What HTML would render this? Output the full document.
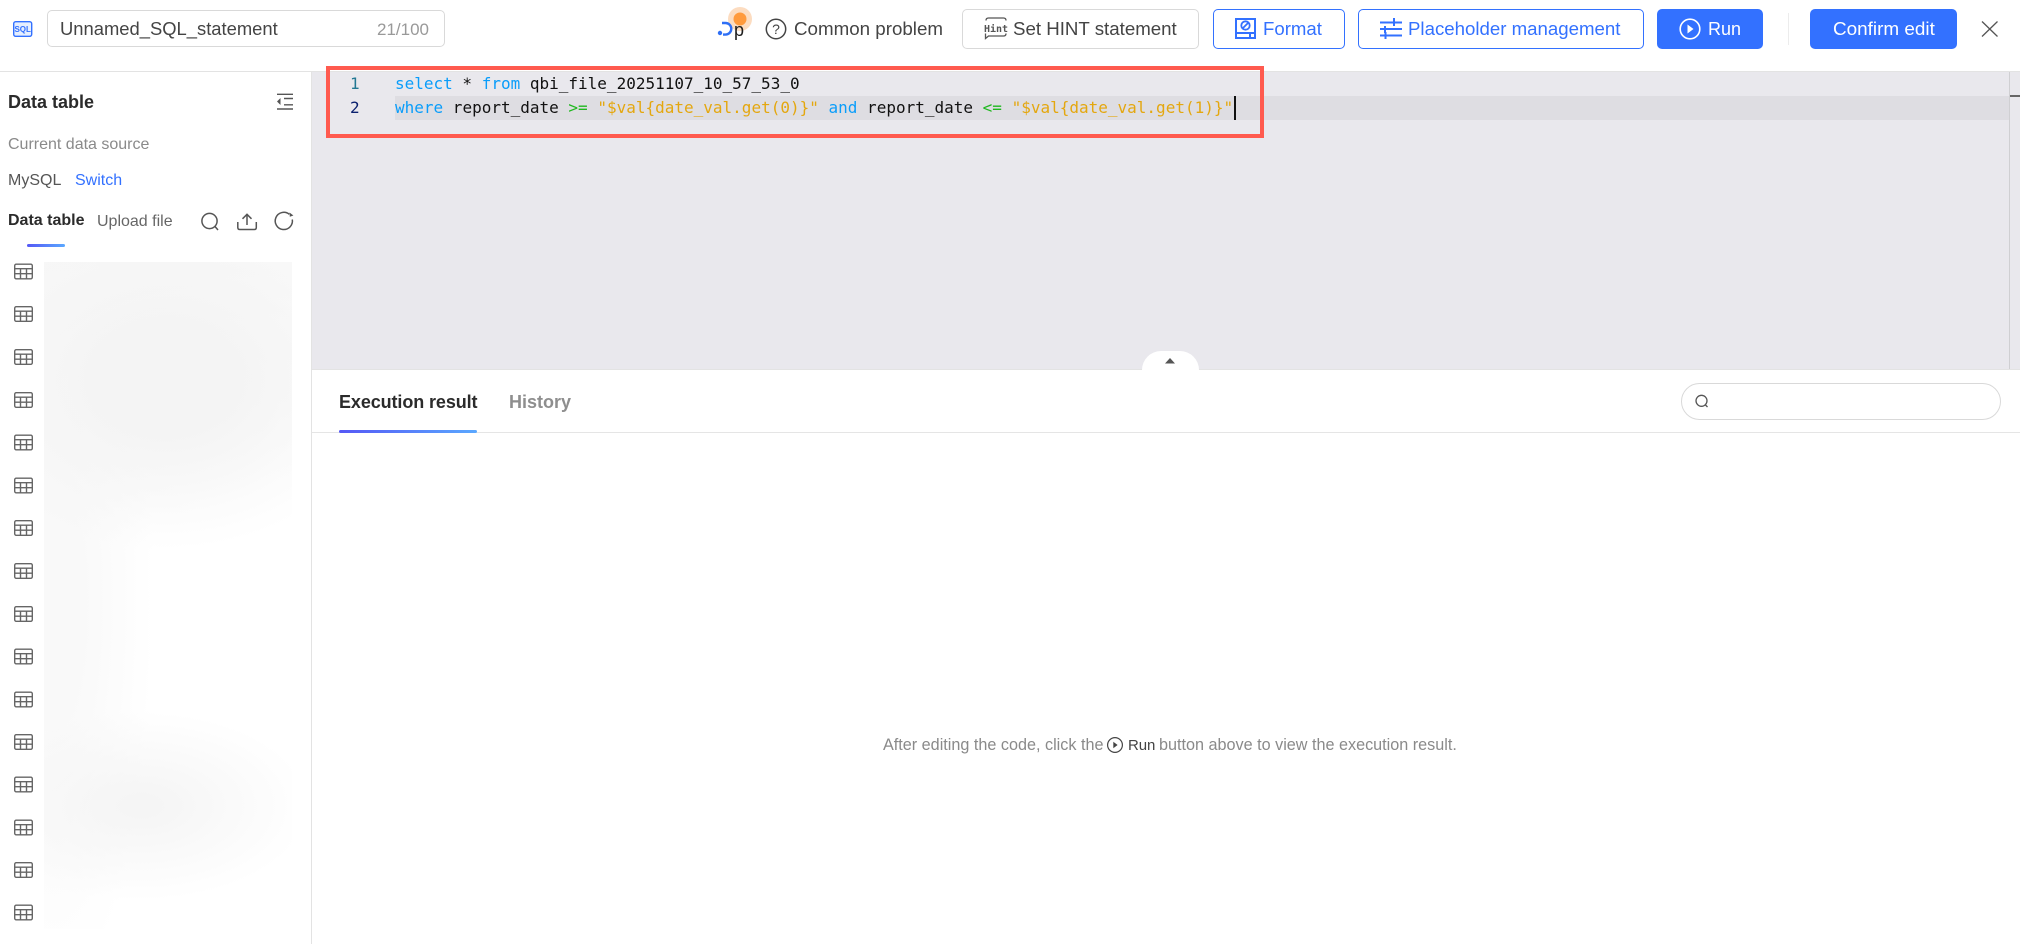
<!DOCTYPE html>
<html lang="en">
<head>
<meta charset="utf-8">
<title>Unnamed_SQL_statement</title>
<style>
html,body{margin:0;padding:0;background:#fff;width:2020px;height:944px;overflow:hidden}
body{position:relative;font-family:"Liberation Sans",Arial,sans-serif;color:#333}
.a{position:absolute;box-sizing:border-box}
.t{position:absolute;white-space:pre;line-height:24px;font-size:16px}
.btn{position:absolute;box-sizing:border-box;top:9px;height:40px;border-radius:5px;background:#fff;border:1px solid #d9d9d9}
.btn.o{border-color:#3371ff}
.btn.p{background:#3371ff;border-color:#3371ff}
svg{position:absolute;left:0;top:0;overflow:visible}
.code{position:absolute;white-space:pre;font:16px/24px "DejaVu Sans Mono","Liberation Mono",monospace;color:#111}
.k{color:#0a9dfa}.o2{color:#1fb81f}.s{color:#e4a70f}
</style>
</head>
<body>
<!-- structural lines -->
<div class="a" style="left:0;top:71px;width:2020px;height:1px;background:#e3e3e3"></div>
<div class="a" style="left:311px;top:72px;width:1px;height:872px;background:#e3e3e3"></div>

<!-- editor -->
<div class="a" style="left:312px;top:72px;width:1708px;height:297px;background:#e9e8ed"></div>
<div class="a" style="left:395px;top:96px;width:1614px;height:24px;background:#dedde2"></div>
<div class="a" style="left:2009px;top:72px;width:1px;height:297px;background:#cfcfd2"></div>
<div class="a" style="left:2010px;top:95px;width:10px;height:2px;background:#666"></div>
<div class="a" style="left:312px;top:369px;width:1708px;height:1px;background:#e3e3e3"></div>
<div class="code" style="left:350px;top:72px;color:#237893">1</div>
<div class="code" style="left:350px;top:96px;color:#0b216f">2</div>
<div class="code" style="left:395px;top:72px"><span class="k">select</span> * <span class="k">from</span> qbi_file_20251107_10_57_53_0</div>
<div class="code" style="left:395px;top:96px"><span class="k">where</span> report_date <span class="o2">&gt;=</span> <span class="s">"$val{date_val.get(0)}"</span> <span class="k">and</span> report_date <span class="o2">&lt;=</span> <span class="s">"$val{date_val.get(1)}"</span></div>
<div class="a" style="left:1234px;top:96px;width:2px;height:24px;background:#111"></div>
<div class="a" style="left:326px;top:66px;width:938px;height:72px;border:4px solid #ff5a4f"></div>
<div class="a" style="left:1142px;top:351px;width:57px;height:19px;background:#fff;border-radius:19px 19px 0 0"></div>

<!-- top bar: input -->
<div class="a" style="left:47px;top:10px;width:398px;height:37px;border:1px solid #d9d9d9;border-radius:5px"></div>
<div class="t" style="left:60px;top:17px;font-size:18.4px;color:#444">Unnamed_SQL_statement</div>
<div class="t" style="left:377px;top:18px;font-size:17px;color:#999">21/100</div>

<!-- top bar: buttons -->
<div class="btn" style="left:962px;width:237px"></div>
<div class="btn o" style="left:1213px;width:132px"></div>
<div class="btn o" style="left:1358px;width:286px"></div>
<div class="btn p" style="left:1657px;width:106px"></div>
<div class="btn p" style="left:1810px;width:147px"></div>
<div class="a" style="left:1788px;top:13px;width:1px;height:32px;background:#ececec"></div>

<div class="t" style="left:794px;top:17px;font-size:18.750px;color:#444">Common problem</div>
<div class="t" style="left:1013px;top:17px;font-size:18.700px;color:#444">Set HINT statement</div>
<div class="t" style="left:1263px;top:17px;font-size:18.600px;color:#3371ff">Format</div>
<div class="t" style="left:1408px;top:17px;font-size:18.650px;color:#3371ff">Placeholder management</div>
<div class="t" style="left:1708px;top:17px;font-size:18px;color:#fff">Run</div>
<div class="t" style="left:1833px;top:18px;font-size:18.900px;color:#fff">Confirm edit</div>

<!-- sidebar text -->
<div class="t" style="left:8px;top:90px;font-size:18px;font-weight:bold;color:#2b2b2b">Data table</div>
<div class="t" style="left:8px;top:133px;color:#8a8a8a">Current data source</div>
<div class="t" style="left:8px;top:169px;color:#555">MySQL</div>
<div class="t" style="left:75px;top:169px;color:#3371ff">Switch</div>
<div class="t" style="left:8px;top:209px;font-weight:bold;color:#2b2b2b">Data table</div>
<div class="t" style="left:97px;top:210px;color:#666">Upload file</div>
<div class="a" style="left:27px;top:244px;width:38px;height:3px;border-radius:2px;background:linear-gradient(90deg,#5558f5,#5aa8ff)"></div>

<!-- blurred list -->
<div class="a" style="left:44px;top:262px;width:248px;height:667px;background:
radial-gradient(ellipse 220px 170px at 123px 118px,#f4f4f4 30%,rgba(245,245,245,0) 100%),
radial-gradient(ellipse 170px 95px at 97px 544px,#f5f5f5 10%,rgba(246,246,246,0) 100%),
radial-gradient(ellipse 100px 400px at 10px 340px,#f9f9f9 30%,rgba(250,250,250,0) 100%),
linear-gradient(160deg,#f7f7f7 0%,#fbfbfb 28%,#ffffff 40%,#ffffff 100%)"></div>

<!-- results -->
<div class="t" style="left:339px;top:390px;font-size:18px;font-weight:bold;letter-spacing:-.1px;color:#2b2b2b">Execution result</div>
<div class="t" style="left:509px;top:390px;font-size:18px;font-weight:bold;color:#8e8e8e">History</div>
<div class="a" style="left:312px;top:432px;width:1708px;height:1px;background:#e5e5e5"></div>
<div class="a" style="left:339px;top:430px;width:138px;height:3px;border-radius:2px;background:linear-gradient(90deg,#5558f5,#5aa8ff)"></div>
<div class="a" style="left:1681px;top:383px;width:320px;height:37px;border:1px solid #d9d9d9;border-radius:19px"></div>

<div class="t" style="left:883px;top:733px;font-size:16.200px;color:#8a8a8a">After editing the code, click the</div>
<div class="t" style="left:1128px;top:734px;font-size:15px;letter-spacing:-.1px;color:#444">Run</div>
<div class="t" style="left:1159px;top:733px;font-size:16.200px;color:#8a8a8a">button above to view the execution result.</div>

<!-- icons -->
<svg width="2020" height="944" viewBox="0 0 2020 944" fill="none">
  <defs>
    <g id="tb" stroke="#666" stroke-width="1.400" fill="none">
      <rect x="0.7" y="0.7" width="17.6" height="14.6" rx="1.5"/>
      <path d="M0.7 5.2H18.3M0.7 10.2H18.3M6.5 5.2V15.300M12.5 5.2V15.300"/>
    </g>
  </defs>
  <!-- SQL icon -->
  <rect x="13.7" y="21.7" width="18" height="14.6" rx="2" fill="#e6efff" stroke="#3371ff" stroke-width="1.4"/>
  <text x="22.7" y="32" font-family="Liberation Sans,sans-serif" font-size="8" font-weight="bold" text-anchor="middle" fill="#3371ff">SQL</text>

  <!-- Dp logo -->
  <circle cx="740" cy="19" r="12" fill="#fcdcc0"/>
  <circle cx="740" cy="19" r="6.500" fill="#ff9a3c"/>
  <circle cx="720" cy="33" r="2.200" fill="#2f6ff5"/>
  <path d="M722 23h3.500a5.800 5.800 0 0 1 0 11.600h-2.500" stroke="#2f6ff5" stroke-width="2.400"/>
  <text x="734" y="36" font-family="Liberation Sans,sans-serif" font-size="18" fill="#1c1c1c">p</text>

  <!-- help -->
  <circle cx="776" cy="29" r="9.700" stroke="#444" stroke-width="1.500"/>
  <text x="776" y="34" font-family="Liberation Sans,sans-serif" font-size="14" text-anchor="middle" fill="#444">?</text>

  <!-- hint -->
  <path d="M986 20.500q0-2.500 2.500-2.500h15q2.500 0 2.500 2.500M1006 33.500q0 2.500-2.500 2.500h-15l-3 2.500v-5" stroke="#555" stroke-width="1.300"/>
  <text x="996" y="32" font-family="DejaVu Sans Mono,monospace" font-size="10" font-weight="bold" text-anchor="middle" fill="#555">Hint</text>

  <!-- format -->
  <path d="M1236 19h19v19h-19zM1236 33h19M1250 33v5" stroke="#3371ff" stroke-width="2"/>
  <circle cx="1245.500" cy="25.500" r="4.200" stroke="#3371ff" stroke-width="1.800"/>
  <path d="M1243 28l5-5" stroke="#3371ff" stroke-width="1.800"/>

  <!-- placeholder -->
  <path d="M1380 22.500h22M1380 29h22M1380 35.500h22M1394 18v8M1385 26v7M1385.500 32v7" stroke="#3371ff" stroke-width="2"/>

  <!-- run -->
  <circle cx="1690" cy="29" r="9.800" stroke="#fff" stroke-width="1.600"/>
  <path d="M1687.500 24.500l6 4.500-6 4.500z" fill="#fff"/>

  <!-- close -->
  <path d="M1982 21.500l15.500 15M1997.500 21.500l-15.500 15" stroke="#555" stroke-width="1.300"/>

  <!-- collapse -->
  <path d="M277 94.300h16M284 98.500h9M284 104.800h9M277 109h16" stroke="#555" stroke-width="1.400"/>
  <path d="M280.500 98v7l-3.500-3.500z" fill="#555"/>

  <!-- sidebar tools -->
  <circle cx="209.500" cy="221" r="7.600" stroke="#555" stroke-width="1.500"/>
  <path d="M215 226.500l3 3.500" stroke="#555" stroke-width="1.500"/>
  <path d="M237.800 222v5.500q0 2 2 2h14.500q2 0 2-2V222" stroke="#555" stroke-width="1.500"/>
  <path d="M247 225V214.500M242.500 218.800l4.500-4.500 4.500 4.500" stroke="#555" stroke-width="1.500"/>
  <path d="M292.300 219.500a8.600 8.600 0 1 1-3-5.200" stroke="#555" stroke-width="1.500"/>
  <path d="M289.500 212.500l.3 4.200 3.600-1.200z" fill="#555"/>

  <!-- table icons -->
  <use href="#tb" x="14" y="263.500"/>
  <use href="#tb" x="14" y="306"/>
  <use href="#tb" x="14" y="349"/>
  <use href="#tb" x="14" y="392"/>
  <use href="#tb" x="14" y="434.500"/>
  <use href="#tb" x="14" y="477.500"/>
  <use href="#tb" x="14" y="520"/>
  <use href="#tb" x="14" y="563"/>
  <use href="#tb" x="14" y="606"/>
  <use href="#tb" x="14" y="648.500"/>
  <use href="#tb" x="14" y="691.500"/>
  <use href="#tb" x="14" y="734"/>
  <use href="#tb" x="14" y="776.500"/>
  <use href="#tb" x="14" y="819.500"/>
  <use href="#tb" x="14" y="862"/>
  <use href="#tb" x="14" y="904.500"/>

  <!-- handle arrow -->
  <path d="M1170 358l5 5.500h-10z" fill="#555"/>

  <!-- search box icon -->
  <circle cx="1701.500" cy="400.800" r="5.500" stroke="#555" stroke-width="1.300"/>
  <path d="M1705.500 405l2 2" stroke="#555" stroke-width="1.300"/>

  <!-- inline run -->
  <circle cx="1115" cy="745" r="7.400" stroke="#444" stroke-width="1.200"/>
  <path d="M1113.300 741.800l4.300 3.200-4.300 3.200z" fill="#444"/>
</svg>
</body>
</html>
